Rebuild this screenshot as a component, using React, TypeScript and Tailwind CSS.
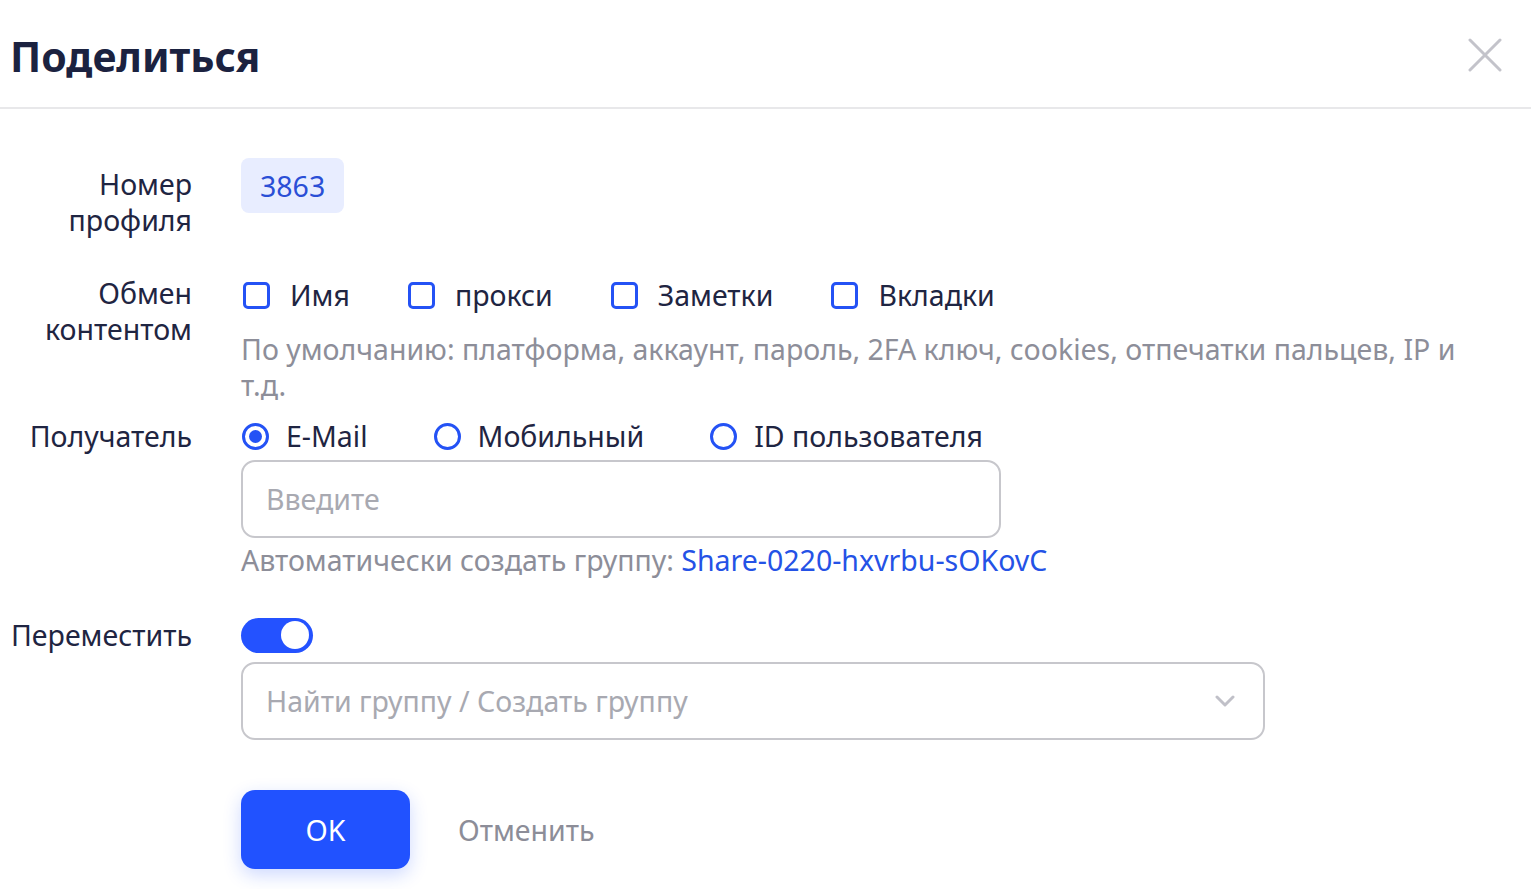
import React, { useState } from "react";

const font = { fontFamily: '"Noto Sans", "Open Sans", sans-serif' };

const Checkbox = ({ label }: { label: string }) => (
	<label className="flex items-center gap-[20px]">
		<span className="w-[27px] h-[27px] rounded-[5px] border-[3px] border-[#2452f5] bg-white"></span>
		<span>{label}</span>
	</label>
);

const Radio = ({ label, checked }: { label: string; checked?: boolean }) => (
	<label className="flex items-center gap-[17px]">
		<span className="w-[27px] h-[27px] rounded-full border-[3px] border-[#2452f5] bg-white flex items-center justify-center">
			{checked && <span className="w-[13px] h-[13px] rounded-full bg-[#2452f5]"></span>}
		</span>
		<span>{label}</span>
	</label>
);

export default function App() {
	const [move, setMove] = useState(true);

	return (
		<div className="w-[1531px] h-[889px] bg-white overflow-hidden text-[28.5px] leading-[36px] text-[#1f2542]" style={font}>
			<div className="h-[109px] flex items-center justify-between pl-[10px] pr-[29px] border-b-2 border-[#e8e8ea]">
				<h1 className="text-[41px] leading-[48px] font-bold text-[#1b2240] pt-[4px]">Поделиться</h1>
				<button className="w-[34px] h-[34px] mt-[2px]">
					<svg viewBox="0 0 34 34" className="w-[34px] h-[34px]" fill="none" stroke="#c3c3ca" strokeWidth="3" strokeLinecap="round">
						<path d="M2 2 L32 32 M32 2 L2 32" />
					</svg>
				</button>
			</div>

			<div className="pt-[49px]">
				{/* Profile number */}
				<div className="flex gap-[49px]">
					<div className="w-[192px] text-right pt-[8px]">Номер<br />профиля</div>
					<div className="h-[55px] px-[19px] rounded-[8px] bg-[#e8edff] text-[#2a4fd6] flex items-center">3863</div>
				</div>

				{/* Content */}
				<div className="flex gap-[49px] mt-[37px]">
					<div className="w-[192px] text-right">Обмен<br />контентом</div>
					<div className="flex-1">
						<div className="h-[40px] flex items-center gap-[58px] pl-[2px]">
							<Checkbox label="Имя" />
							<Checkbox label="прокси" />
							<Checkbox label="Заметки" />
							<Checkbox label="Вкладки" />
						</div>
						<p className="mt-[16px] w-[1236px] text-[#8d8e99]">
							По умолчанию: платформа, аккаунт, пароль, 2FA ключ, cookies, отпечатки пальцев, IP и т.д.
						</p>
					</div>
				</div>

				{/* Recipient */}
				<div className="flex gap-[49px] mt-[15px]">
					<div className="w-[192px] text-right">Получатель</div>
					<div className="flex-1">
						<div className="h-[36px] flex items-center gap-[66px] pl-[1px]">
							<Radio label="E-Mail" checked />
							<Radio label="Мобильный" />
							<Radio label="ID пользователя" />
						</div>
						<input
							placeholder="Введите"
							className="mt-[6px] w-[760px] h-[78px] rounded-[14px] border-2 border-[#c7c7cc] px-[23px] outline-none placeholder:text-[#a8a9b1]"
							style={font}
						/>
						<p className="mt-[4px] text-[#8d8e99]">
							Автоматически создать группу: <span className="text-[#2452e6]">Share-0220-hxvrbu-sOKovC</span>
						</p>
					</div>
				</div>

				{/* Move */}
				<div className="flex gap-[49px] mt-[39px]">
					<div className="w-[192px] text-right">Переместить</div>
					<div className="flex-1">
						<div className="h-[36px] flex items-center">
							<button
								onClick={() => setMove(!move)}
								className={`w-[72px] h-[35px] rounded-full flex items-center px-[4px] ${move ? "bg-[#2452ff] justify-end" : "bg-[#c7c7cc] justify-start"}`}
							>
								<span className="w-[28px] h-[28px] rounded-full bg-white"></span>
							</button>
						</div>
						<div className="mt-[9px] w-[1024px] h-[78px] rounded-[14px] border-2 border-[#c7c7cc] pl-[23px] pr-[28px] flex items-center justify-between text-[#a8a9b1]">
							<span>Найти группу / Создать группу</span>
							<svg viewBox="0 0 20 12" className="w-[20px] h-[12px]" fill="none" stroke="#c0c0c8" strokeWidth="3" strokeLinecap="round" strokeLinejoin="round">
								<path d="M2 2 L10 10 L18 2" />
							</svg>
						</div>
					</div>
				</div>

				{/* Buttons */}
				<div className="flex items-center gap-[48px] mt-[50px] pl-[241px]">
					<button className="w-[169px] h-[79px] rounded-[14px] bg-[#2152ff] text-white shadow-[0_6px_18px_rgba(33,82,255,0.22)]" style={font}>
						OK
					</button>
					<button className="text-[#8c8d98]" style={font}>Отменить</button>
				</div>
			</div>
		</div>
	);
}
